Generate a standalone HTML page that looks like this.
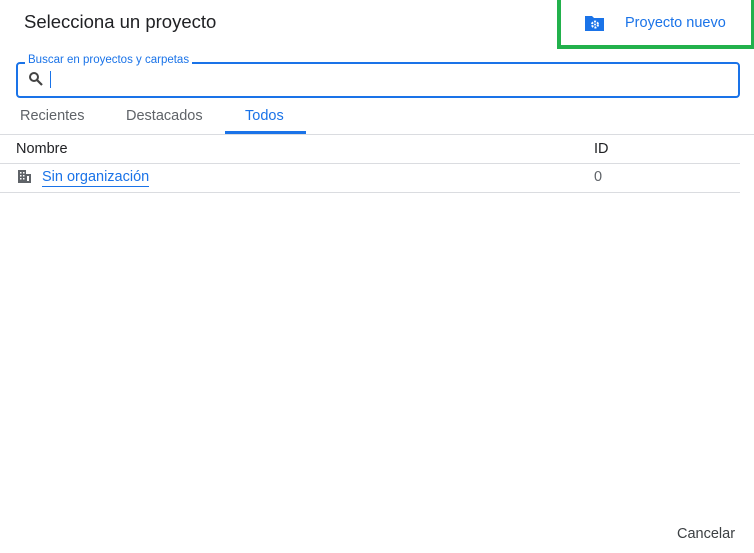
<!DOCTYPE html>
<html><head><style>
body{margin:0;width:754px;height:553px;background:#fff;font-family:"Liberation Sans",sans-serif;position:relative;overflow:hidden;color:#202124}
.a{position:absolute;white-space:nowrap}
</style></head><body>
<div class="a" style="left:24px;top:11px;font-size:18.5px;color:#202124">Selecciona un proyecto</div>
<div class="a" style="left:557px;top:0;width:190px;height:45px;border:4px solid #22b14c;border-top:none"></div>
<svg class="a" style="left:584px;top:14px" width="22" height="18" viewBox="0 0 22 18"><path d="M1 2h7l2 2h10v13H1z" fill="#1a73e8"/><circle cx="11" cy="10.5" r="3" fill="none" stroke="#fff" stroke-width="2" stroke-dasharray="2 1.2"/><circle cx="11" cy="10.5" r="1" fill="#fff"/></svg>
<div class="a" style="left:625px;top:15px;font-size:14.5px;color:#1a73e8">Proyecto nuevo</div>
<div class="a" style="left:16px;top:62px;width:720px;height:32px;border:2px solid #1a73e8;border-radius:4px"></div>
<div class="a" style="left:25px;top:54px;font-size:11.5px;color:#1a73e8;background:#fff;padding:0 3px">Buscar en proyectos y carpetas</div>
<svg class="a" style="left:28px;top:71px" width="16" height="16" viewBox="0 0 16 16"><circle cx="6" cy="6" r="4" fill="none" stroke="#444" stroke-width="2"/><path d="M9 9l5 5" stroke="#444" stroke-width="2.2"/></svg>
<div class="a" style="left:50px;top:71px;width:1px;height:17px;background:#1a73e8"></div>
<div class="a" style="left:20px;top:108px;font-size:14.5px;color:#5f6368">Recientes</div>
<div class="a" style="left:126px;top:108px;font-size:14.5px;color:#5f6368">Destacados</div>
<div class="a" style="left:245px;top:108px;font-size:14.5px;color:#1a73e8">Todos</div>
<div class="a" style="left:225px;top:131px;width:81px;height:3px;background:#1a73e8"></div>
<div class="a" style="left:0;top:134px;width:754px;height:1px;background:#dadce0"></div>
<div class="a" style="left:16px;top:141px;font-size:14.5px">Nombre</div>
<div class="a" style="left:594px;top:141px;font-size:14.5px">ID</div>
<div class="a" style="left:0;top:163px;width:740px;height:1px;background:#dadce0"></div>
<svg class="a" style="left:17px;top:169px" width="15" height="15" viewBox="0 0 15 15"><path d="M1 1h8v4h5v9H1z" fill="#5f6368"/><g fill="#fff"><rect x="3" y="3" width="1.5" height="1.5"/><rect x="6" y="3" width="1.5" height="1.5"/><rect x="3" y="6" width="1.5" height="1.5"/><rect x="6" y="6" width="1.5" height="1.5"/><rect x="3" y="9" width="1.5" height="1.5"/><rect x="6" y="9" width="1.5" height="1.5"/><rect x="10" y="7" width="2" height="5"/></g></svg>
<div class="a" style="left:42px;top:169px;font-size:14.5px;color:#1a73e8;border-bottom:1px solid #1a73e8;padding-bottom:1px">Sin organización</div>
<div class="a" style="left:594px;top:169px;font-size:14.5px;color:#5f6368">0</div>
<div class="a" style="left:0;top:192px;width:740px;height:1px;background:#dadce0"></div>
<div class="a" style="left:677px;top:526px;font-size:14.5px;color:#3c4043">Cancelar</div>
</body></html>
